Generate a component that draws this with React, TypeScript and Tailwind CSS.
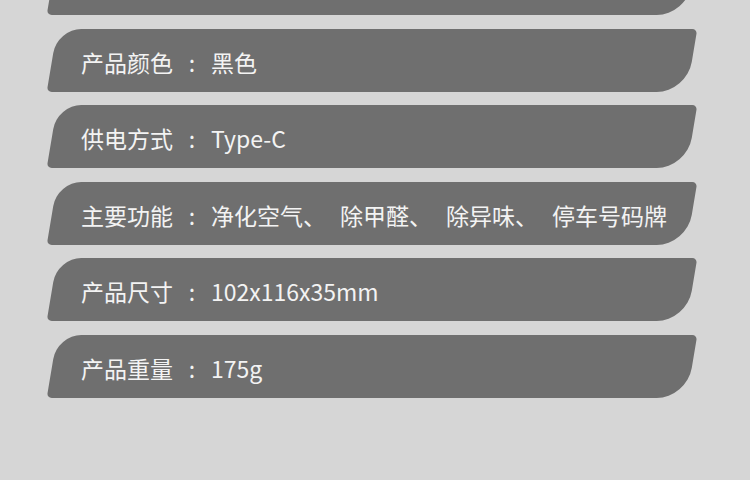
const specs: { label: string; value: string[] }[] = [
  { label: '', value: [] },
  { label: '产品颜色', value: ['黑色'] },
  { label: '供电方式', value: ['Type-C'] },
  { label: '主要功能', value: ['净化空气、', '除甲醛、', '除异味、', '停车号码牌'] },
  { label: '产品尺寸', value: ['102x116x35mm'] },
  { label: '产品重量', value: ['175g'] },
];

const SpecBar = ({ label, value }: { label: string; value: string[] }) => (
  <div className="ml-[52px] h-[63px] w-[640px] shrink-0 skew-x-[-9.5deg] rounded-tl-[24px] rounded-br-[30px] rounded-tr-[5px] rounded-bl-[5px] bg-[#6f6f6f]">
    <div className="flex h-full w-full skew-x-[9.5deg] items-center pl-[29px] pt-[4px] text-[23px] leading-none text-[#f3f3f3]">
      {label && (
        <>
          <span className="w-[92px]">{label}</span>
          <span className="w-[38px] text-center">:</span>
          <div className="flex gap-[14px]">
            {value.map((v) => (
              <span key={v}>{v}</span>
            ))}
          </div>
        </>
      )}
    </div>
  </div>
);

export default function App() {
  return (
    <div
      className="h-[480px] w-full overflow-hidden bg-[#d6d6d6]"
      style={{ fontFamily: '"Noto Sans CJK SC", "Noto Sans", sans-serif' }}
    >
      <div className="mt-[-48px] flex flex-col gap-[13.5px]">
        {specs.map((s, i) => (
          <SpecBar key={i} label={s.label} value={s.value} />
        ))}
      </div>
    </div>
  );
}
